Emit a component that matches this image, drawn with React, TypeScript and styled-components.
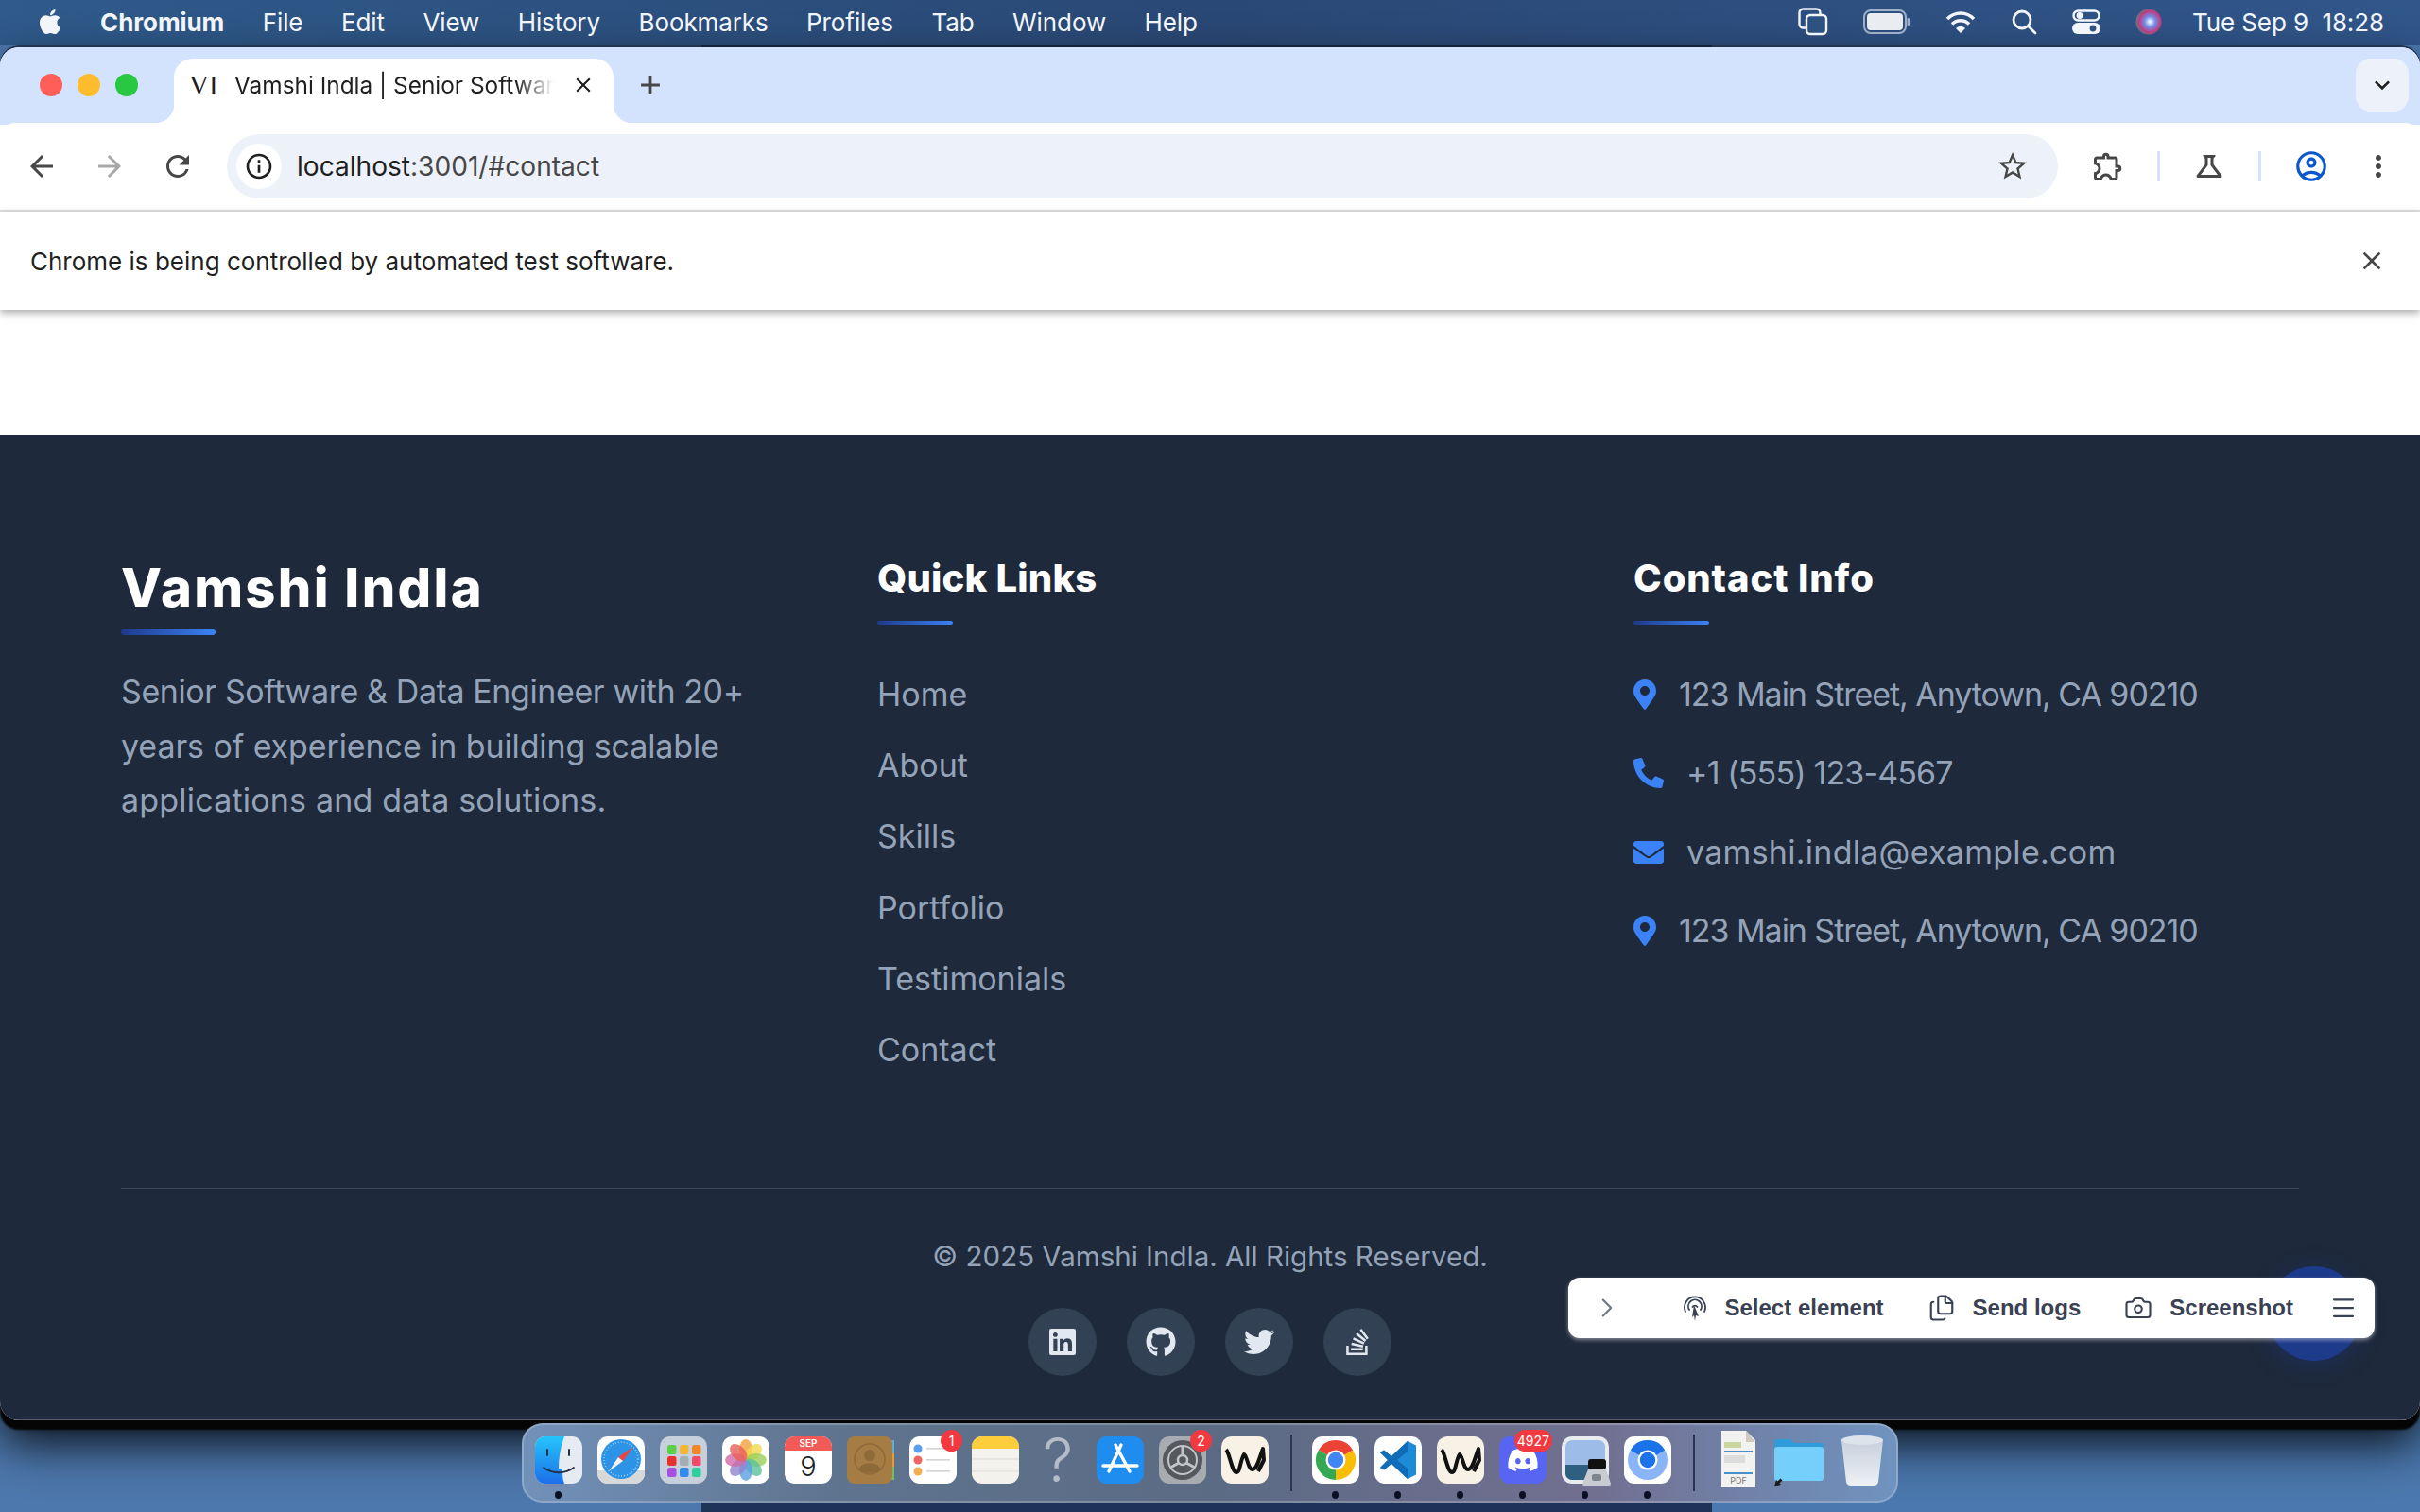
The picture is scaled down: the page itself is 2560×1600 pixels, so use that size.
import React from 'react';
import styled, { createGlobalStyle } from 'styled-components';
import { FaApple, FaMapMarkerAlt, FaPhoneAlt, FaEnvelope, FaLinkedin, FaGithub, FaTwitter, FaStackOverflow, FaDiscord } from 'react-icons/fa';
import { MdArrowBack, MdArrowForward, MdRefresh, MdInfoOutline, MdStarBorder, MdOutlineExtension, MdOutlineScience, MdOutlineAccountCircle, MdMoreVert, MdClose, MdAdd, MdKeyboardArrowDown } from 'react-icons/md';
import { ChevronRight, Files, Camera, Menu } from 'lucide-react';

const GlobalStyle = createGlobalStyle`
  html, body { margin: 0; padding: 0; background: #4d78ad; }
  * { box-sizing: border-box; }
`;

const FOOTER_FONT = `Inter, "Noto Sans", sans-serif`;
const MAC_FONT = `Inter, "Liberation Sans", sans-serif`;

const Desktop = styled.div`
  position: relative;
  width: 2560px;
  height: 1600px;
  overflow: hidden;
  background: linear-gradient(90deg, #4d78ad 0 29%, #1f3358 29% 70.75%, #4b78ae 70.75% 100%);
`;

/* macOS menu bar */
const MenuBar = styled.div`
  height: 48px;
  display: flex;
  align-items: center;
  padding: 0 38px 2px 38px;
  background: linear-gradient(90deg, #2f5a8a, #2a4875 50%, #31568a);
  color: #f2f5f9;
  font: 400 26px ${MAC_FONT};
  letter-spacing: -0.1px;
`;
const MenuItems = styled.div`
  display: flex;
  align-items: center;
  gap: 40.5px;
`;
const AppName = styled.span`
  font-weight: 700;
  margin-left: 38px;
`;
const MenuStatus = styled.div`
  margin-left: auto;
  display: flex;
  align-items: center;
  gap: 37px;
`;
const Clock = styled.span`
  margin-left: -5px;
`;

/* Browser window */
const BrowserWindow = styled.div`
  height: 1453px;
  margin-top: 2px;
  display: flex;
  flex-direction: column;
  overflow: hidden;
  border-radius: 20px;
  background: #fff;
  box-shadow: 0 -2px 0 rgba(20, 30, 50, 0.7), 0 10px 2px #050505, 0 24px 50px rgba(0, 0, 0, 0.9);
`;
const TabStrip = styled.div`
  height: 82px;
  flex: none;
  display: flex;
  align-items: flex-start;
  padding: 12px 12px 0 42px;
  background: #d3e3fd;
`;
const Light = styled.span<{ $color: string }>`
  width: 24px;
  height: 24px;
  margin: 16px 16px 0 0;
  border-radius: 50%;
  background: ${p => p.$color};
`;
const Tab = styled.div`
  position: relative;
  width: 465px;
  height: 68px;
  margin-left: 22px;
  display: flex;
  align-items: center;
  padding: 0 14px 12px 16px;
  border-radius: 20px 20px 0 0;
  background: #fff;
  color: #1f1f1f;
  font: 400 24.4px ${MAC_FONT};
  &::before, &::after {
    content: '';
    position: absolute;
    bottom: 0;
    width: 20px;
    height: 20px;
  }
  &::before {
    left: -20px;
    background: radial-gradient(circle at 0 0, #d3e3fd 20px, #fff 20.5px);
  }
  &::after {
    right: -20px;
    background: radial-gradient(circle at 100% 0, #d3e3fd 20px, #fff 20.5px);
  }
`;
const Favicon = styled.span`
  width: 32px;
  flex: none;
  font: 400 29px "Liberation Serif", serif;
`;
const TabTitle = styled.span`
  width: 338px;
  margin-left: 16px;
  flex: none;
  overflow: hidden;
  white-space: nowrap;
  -webkit-mask-image: linear-gradient(90deg, #000 88%, transparent);
  mask-image: linear-gradient(90deg, #000 88%, transparent);
`;
const IconSlot = styled.span<{ $color?: string }>`
  display: inline-flex;
  align-items: center;
  justify-content: center;
  flex: none;
  color: ${p => p.$color || '#474747'};
`;
const TabClose = styled(IconSlot)`
  margin-left: 18px;
`;
const NewTab = styled(IconSlot)`
  margin: 11px 0 0 22px;
`;
const TabSearch = styled.div`
  margin-left: auto;
  width: 56px;
  height: 56px;
  display: flex;
  align-items: center;
  justify-content: center;
  border-radius: 16px;
  background: #edf2fa;
  color: #1f1f1f;
`;
const Toolbar = styled.div`
  height: 94px;
  flex: none;
  display: flex;
  align-items: center;
  padding: 0 22px 0 26px;
  border-radius: 16px 16px 0 0;
  margin-top: -2px;
  background: #fff;
  border-bottom: 2px solid #e2e2e2;
`;
const NavIcons = styled.div`
  display: flex;
  gap: 36px;
`;
const AddressPill = styled.div`
  width: 1937px;
  height: 68px;
  margin-left: 34px;
  flex: none;
  display: flex;
  align-items: center;
  padding: 0 30px 0 10px;
  border-radius: 34px;
  background: #edf2fa;
`;
const InfoChip = styled.span`
  width: 48px;
  height: 48px;
  display: flex;
  align-items: center;
  justify-content: center;
  border-radius: 50%;
  background: #fff;
  color: #1f1f1f;
`;
const Url = styled.span`
  margin-left: 16px;
  font: 400 28.1px ${MAC_FONT};
  color: #1f1f1f;
`;
const UrlRest = styled.span`
  color: #474747;
`;
const Star = styled(IconSlot)`
  margin-left: auto;
`;
const ToolIcons = styled.div`
  margin-left: 35px;
  display: flex;
  align-items: center;
  gap: 34px;
`;
const Divider = styled.span`
  width: 3px;
  height: 32px;
  background: #d3e3fd;
`;
const InfoBar = styled.div`
  position: relative;
  height: 104px;
  flex: none;
  display: flex;
  align-items: center;
  justify-content: space-between;
  padding: 0 35px 0 32px;
  font: 400 26px ${MAC_FONT};
  color: #1f1f1f;
  box-shadow: 0 3px 8px rgba(0, 0, 0, 0.35);
`;
const PageGap = styled.div`
  height: 132px;
  flex: none;
`;

/* Page footer */
const Footer = styled.footer`
  flex: 1;
  padding: 112px 128px 0;
  background: #1e293b;
  color: #94a3b8;
  font-family: ${FOOTER_FONT};
  box-shadow: inset 0 -1px 0 rgba(255, 255, 255, 0.25);
`;
const Columns = styled.div`
  display: grid;
  grid-template-columns: repeat(3, 704px);
  gap: 96px;
`;
const BrandTitle = styled.div`
  padding-top: 10px;
  font-size: 56px;
  font-weight: 800;
  letter-spacing: 2.3px;
  line-height: 80px;
  color: #fff;
`;
const Accent = styled.div<{ $width: number; $height: number; $top: number }>`
  width: ${p => p.$width}px;
  height: ${p => p.$height}px;
  margin-top: ${p => p.$top}px;
  border-radius: 3px;
  background: linear-gradient(90deg, #1e3a8a, #3b82f6);
`;
const About = styled.p`
  margin: 31px 0 0;
  font-size: 34px;
  line-height: 57.5px;
`;
const AboutLine = styled.span<{ $tracking: number }>`
  display: block;
  letter-spacing: ${p => p.$tracking}px;
`;
const ColumnTitle = styled.div<{ $tracking: number }>`
  font-size: 40px;
  font-weight: 800;
  letter-spacing: ${p => p.$tracking}px;
  line-height: 80px;
  color: #fff;
`;
const LinkList = styled.div`
  margin-top: 46px;
  display: flex;
  flex-direction: column;
  gap: 19.2px;
`;
const FooterLink = styled.a`
  font-size: 34px;
  line-height: 56px;
`;
const ContactList = styled.div`
  margin-top: 46px;
  display: flex;
  flex-direction: column;
  gap: 27.3px;
`;
const ContactRow = styled.div<{ $tracking: number }>`
  display: flex;
  align-items: center;
  gap: 24px;
  font-size: 34px;
  line-height: 56px;
  letter-spacing: ${p => p.$tracking}px;
  svg { color: #3b82f6; flex: none; }
`;
const PinIcon = styled(FaMapMarkerAlt)`
  width: 24px;
  height: 32px;
`;
const FooterBottom = styled.div`
  margin-top: 118px;
  padding-top: 43px;
  border-top: 1px solid #3a4557;
  display: flex;
  flex-direction: column;
  align-items: center;
`;
const Copyright = styled.div`
  font-size: 29.5px;
  line-height: 56px;
`;
const Socials = styled.div`
  margin-top: 27px;
  display: flex;
  gap: 32px;
`;
const SocialLink = styled.a`
  width: 72px;
  height: 72px;
  display: flex;
  align-items: center;
  justify-content: center;
  border-radius: 50%;
  background: #334155;
  color: #e2e8f0;
`;

/* Floating dev toolbar and the button it covers */
const BlueFab = styled.div`
  position: absolute;
  left: 2398px;
  top: 1340px;
  width: 100px;
  height: 100px;
  border-radius: 50%;
  background: #1e3a8a;
  box-shadow: 0 4px 24px rgba(30, 58, 138, 0.4);
`;
const DevToolbar = styled.div`
  position: absolute;
  left: 1659px;
  top: 1352px;
  width: 853px;
  height: 64px;
  display: flex;
  align-items: center;
  padding: 0 18px 0 24px;
  border-radius: 12px;
  background: #fff;
  box-shadow: 0 2px 4px rgba(255, 255, 255, 0.45);
  color: #3a4152;
  font: 700 24px "Liberation Sans", sans-serif;
`;
const DevAction = styled.div<{ $left: number; $gap: number }>`
  display: flex;
  align-items: center;
  gap: ${p => p.$gap}px;
  margin-left: ${p => p.$left}px;
`;
const DevMenu = styled(IconSlot)`
  margin-left: auto;
`;

/* Dock */
const Dock = styled.div`
  position: absolute;
  left: 552px;
  top: 1506px;
  width: 1456px;
  height: 84px;
  display: flex;
  padding: 12px 0 0 12px;
  border-radius: 22px;
  border: 2px solid rgba(255, 255, 255, 0.22);
  background: linear-gradient(90deg, #7291b9, #5f748f 22%, #5b6b84 50%, #726f90 78%, #6f93bf);
`;
const DockTile = styled.div`
  position: relative;
  width: 50px;
  height: 50px;
  margin-right: 16px;
  flex: none;
`;
const RunDot = styled.span`
  position: absolute;
  left: 21px;
  top: 58px;
  width: 7px;
  height: 8px;
  border-radius: 50%;
  background: #0a1024;
`;
const Badge = styled.span`
  position: absolute;
  right: -6px;
  top: -7px;
  min-width: 23px;
  height: 23px;
  padding: 0 3px;
  border-radius: 12px;
  background: #f2393f;
  color: #fff;
  text-align: center;
  font: 400 14px/23px ${MAC_FONT};
`;
const DockSep = styled.span`
  width: 2px;
  height: 60px;
  margin: -2px 21px 0 7px;
  flex: none;
  background: #2b3550;
`;
const QuestionMark = styled.span`
  display: block;
  text-align: center;
  font: 300 64px/50px ${MAC_FONT};
  color: #b4bcc8;
`;
const DockArt = styled.svg<{ $top?: number; $left?: number }>`
  display: block;
  margin: ${p => p.$top || 0}px 0 0 ${p => p.$left || 0}px;
`;

const Rounded = ({ children, fill = '#fff' }: { children?: React.ReactNode; fill?: string }) => (
  <svg width="50" height="50" viewBox="0 0 50 50">
    <rect width="50" height="50" rx="11" fill={fill} />
    {children}
  </svg>
);

const Finder = () => (
  <svg width="50" height="50" viewBox="0 0 50 50">
    <defs>
      <linearGradient id="fnd" x1="0" y1="0" x2="0" y2="1">
        <stop offset="0" stopColor="#25c5fb" />
        <stop offset="1" stopColor="#1c6fe9" />
      </linearGradient>
    </defs>
    <rect width="50" height="50" rx="11" fill="#e6ebf2" />
    <path d="M11 0h20c-4 12-6 22-6 34h4c0 6 0 11 2 16H11A11 11 0 0 1 0 39V11A11 11 0 0 1 11 0z" fill="url(#fnd)" />
    <path d="M13 14v6M36 14v6" stroke="#22304a" strokeWidth="2" strokeLinecap="round" />
    <path d="M9 33c9 7 23 7 32 0" stroke="#22304a" strokeWidth="1.8" fill="none" strokeLinecap="round" />
  </svg>
);
const Safari = () => (
  <Rounded>
    <path d="M0 36h50v3a11 11 0 0 1-11 11H11A11 11 0 0 1 0 39z" fill="#d6d8da" />
    <circle cx="25" cy="24" r="21" fill="#2d93e6" />
    <circle cx="25" cy="24" r="18" fill="none" stroke="#9bd0f4" strokeWidth="1.4" strokeDasharray="1 2" />
    <path d="M38 11L27 26 22 22z" fill="#f0423c" />
    <path d="M12 37l10-15 5 4z" fill="#f2f4f7" />
  </Rounded>
);
const Launchpad = () => {
  const colors = ['#5ad04a', '#f5b52e', '#f0862a', '#e6312e', '#a4adb5', '#f24a6a', '#a550e0', '#2f8cf0', '#2fcf9d'];
  return (
    <Rounded fill="#c6d0dc">
      {colors.map((c, i) => (
        <rect key={c} x={8 + (i % 3) * 13} y={9 + Math.floor(i / 3) * 12} width="9.500" height="10" rx="2.5" fill={c} />
      ))}
    </Rounded>
  );
};
const Photos = () => {
  const petals = ['#f4a03a', '#f0d84a', '#9ad05a', '#5cc09a', '#5aa0e0', '#9085d0', '#d06aa8', '#e8605a'];
  return (
    <Rounded>
      {petals.map((c, i) => (
        <ellipse key={c} cx="25" cy="14" rx="7" ry="11" fill={c} opacity="0.8" transform={`rotate(${i * 45} 25 25)`} />
      ))}
    </Rounded>
  );
};
const Calendar = () => (
  <Rounded>
    <path d="M0 15V11A11 11 0 0 1 11 0h28a11 11 0 0 1 11 11v4z" fill="#f25a57" />
    <text x="25" y="11" textAnchor="middle" fontSize="10" fontWeight="600" fontFamily="Inter, sans-serif" fill="#fff">SEP</text>
    <text x="25" y="42" textAnchor="middle" fontSize="29" fontFamily="Inter, sans-serif" fontWeight="300" fill="#222">9</text>
  </Rounded>
);
const Contacts = () => (
  <svg width="50" height="50" viewBox="0 0 50 50">
    <rect x="40" y="4" width="10" height="14" fill="#58b0e0" />
    <rect x="40" y="18" width="10" height="14" fill="#e89a30" />
    <rect x="40" y="32" width="10" height="14" fill="#6cc060" />
    <rect width="48" height="50" rx="8" fill="#a67c45" />
    <circle cx="24" cy="24" r="16" fill="none" stroke="#8f6a39" strokeWidth="1.5" />
    <circle cx="24" cy="20" r="6" fill="#8f6a39" />
    <path d="M12 35c3-9 21-9 24 0-7 5-17 5-24 0z" fill="#8f6a39" />
  </svg>
);
const Reminders = () => (
  <Rounded>
    {['#3b8df0', '#ef4a44', '#f0a030'].map((c, i) => (
      <g key={c}>
        <circle cx="9" cy={13 + i * 12} r="4.5" fill={c} opacity="0.85" />
        <rect x="18" y={12 + i * 12} width="25" height="1.6" fill="#d5d5d8" />
      </g>
    ))}
  </Rounded>
);
const Notes = () => (
  <Rounded fill="#f4f2ec">
    <path d="M0 13V11A11 11 0 0 1 11 0h28a11 11 0 0 1 11 11v2z" fill="#fdcd3c" />
    <path d="M0 24h50M0 37h50" stroke="#dedbd2" strokeWidth="1" />
  </Rounded>
);
const AppStore = () => (
  <Rounded fill="#1f8cf0">
    <path d="M26 9L13 37M20 9l15 28M7 31h36" stroke="#fff" strokeWidth="3.4" strokeLinecap="round" fill="none" />
  </Rounded>
);
const SystemSettings = () => (
  <Rounded fill="#a8abaf">
    <circle cx="25" cy="25" r="21" fill="#55585d" />
    <circle cx="25" cy="25" r="15" fill="none" stroke="#c2c4c7" strokeWidth="2" />
    <circle cx="25" cy="25" r="5" fill="none" stroke="#c2c4c7" strokeWidth="2.5" />
    <path d="M25 20V10M29 28l9 5M21 28l-9 5" stroke="#c2c4c7" strokeWidth="3" />
  </Rounded>
);
const Warp = () => (
  <Rounded fill="#f7f1e6">
    <path d="M5 14c4 4 6 24 11 24 4 0 4-13 8-19 3 0 4 16 9 16 5 0 7-12 11-22l1 12-6 12" stroke="#111" strokeWidth="4" fill="none" strokeLinejoin="round" />
  </Rounded>
);
const Chrome = () => (
  <Rounded>
    <path d="M25 25L6.800 14.5A21 21 0 0 1 43.2 14.5z" fill="#ea4335" />
    <path d="M25 25L43.2 14.5A21 21 0 0 1 25 46z" fill="#fbbc04" />
    <path d="M25 25L25 46A21 21 0 0 1 6.800 14.5z" fill="#34a853" />
    <circle cx="25" cy="25" r="10.5" fill="#fff" />
    <circle cx="25" cy="25" r="8.2" fill="#4285f4" />
  </Rounded>
);
const VsCode = () => (
  <Rounded>
    <path d="M35 5l9 4.5v31L35 45 18 29l-8 6.5-4-2.500 8-8-8-8 4-2.500 8 6.500z" fill="#1f8ad6" />
    <path d="M35 5v40L18 29l-8 6.5-4-2.500 8-8-8-8 4-2.500 8 6.500zM35 16l-11 9 11 9z" fill="#0f6cb8" fillRule="evenodd" />
  </Rounded>
);
const Discord = () => (
  <svg width="50" height="50" viewBox="0 0 50 50">
    <rect width="50" height="50" rx="11" fill="#5865f2" />
    <foreignObject x="8" y="8" width="34" height="34">
      <FaDiscord size={34} color="#fff" />
    </foreignObject>
  </svg>
);
const Preview = () => (
  <svg width="52" height="52" viewBox="0 0 52 52">
    <rect width="50" height="50" rx="11" fill="#e8ecef" />
    <rect x="4" y="4" width="42" height="42" rx="7" fill="#9dbce8" />
    <path d="M4 30h42v9a7 7 0 0 1-7 7H11a7 7 0 0 1-7-7z" fill="#2f5f80" />
    <rect x="28" y="24" width="19" height="11" rx="3" fill="#111" />
    <path d="M28 35h19l5 15a2 2 0 0 1-2 2H24a2 2 0 0 1-2-2z" fill="#c8ccd0" />
    <rect x="32" y="40" width="10" height="7" rx="2" fill="#7e858c" />
  </svg>
);
const Chromium = () => (
  <Rounded>
    <circle cx="25" cy="25" r="21" fill="#8ab4f8" />
    <path d="M25 25L6.800 14.5A21 21 0 0 1 43.2 14.5z" fill="#1a73e8" />
    <circle cx="25" cy="25" r="10.5" fill="#fff" />
    <circle cx="25" cy="25" r="8.2" fill="#1a73e8" />
  </Rounded>
);
const PdfDoc = () => (
  <DockArt width="50" height="60" viewBox="0 0 50 60" $top={-6}>
    <path d="M7 0h26l10 10v50H7z" fill="#f2f2f0" />
    <path d="M33 0v12h10z" fill="#cfcac0" />
    <rect x="10" y="12" width="18" height="6" fill="#c9d6a0" />
    <rect x="10" y="21" width="30" height="2" fill="#4a90c8" />
    <rect x="10" y="26" width="22" height="8" fill="#dcdcdc" />
    <rect x="10" y="44" width="30" height="2" fill="#4a90c8" />
    <text x="25" y="56" textAnchor="middle" fontSize="9" fontFamily="Inter, sans-serif" fill="#777">PDF</text>
  </DockArt>
);
const Folder = () => (
  <DockArt width="56" height="54" viewBox="0 0 56 54" $left={-3}>
    <path d="M0 6a3 3 0 0 1 3-3h14l4 4h28a3 3 0 0 1 3 3v36H0z" fill="#2f9bdb" />
    <rect x="0" y="11" width="52" height="36" rx="3" fill="#74cffa" />
    <path d="M0 53l2-7 1.500 1.500 3-3 2 2-3 3L7 51z" fill="#1c1c1e" />
  </DockArt>
);
const Trash = () => (
  <DockArt width="50" height="56" viewBox="0 0 50 56" $top={-2} $left={-1}>
    <defs>
      <linearGradient id="trs" x1="0" y1="0" x2="0" y2="1">
        <stop offset="0" stopColor="#c6d0dd" />
        <stop offset="1" stopColor="#eef1f4" />
      </linearGradient>
    </defs>
    <path d="M3 6h44l-5 44a5 5 0 0 1-5 4H13a5 5 0 0 1-5-4z" fill="url(#trs)" />
    <ellipse cx="25" cy="6" rx="22" ry="5" fill="#dde3ea" />
  </DockArt>
);

const StageManager = () => (
  <svg width="32" height="30" viewBox="0 0 32 30" fill="none" stroke="#f2f5f9" strokeWidth="2.4">
    <rect x="1.5" y="1.5" width="22" height="20" rx="4" />
    <rect x="9" y="8" width="21" height="20" rx="4" fill="#2e527f" />
  </svg>
);
const Battery = () => (
  <svg width="50" height="26" viewBox="0 0 50 26">
    <rect x="1" y="1" width="44" height="24" rx="7" fill="none" stroke="#9db0c8" strokeWidth="2" />
    <rect x="4" y="4" width="38" height="18" rx="4" fill="#e9edf2" />
    <rect x="46.5" y="9" width="2.5" height="8" rx="1" fill="#9db0c8" />
  </svg>
);
const Wifi = () => (
  <svg width="32" height="26" viewBox="0 0 32 26" fill="none" stroke="#f2f5f9" strokeWidth="3.6">
    <path d="M2 10c8-8 20-8 28 0M7 15.5c5-5 13-5 18 0" />
    <path d="M16 25l-5-5c3-2.600 7-2.600 10 0z" fill="#f2f5f9" stroke="none" />
  </svg>
);
const Spotlight = () => (
  <svg width="28" height="28" viewBox="0 0 28 28" fill="none" stroke="#f2f5f9" strokeWidth="2.8">
    <circle cx="12" cy="12" r="9" />
    <path d="M19 19l7 7" strokeLinecap="round" />
  </svg>
);
const ControlCenter = () => (
  <svg width="30" height="26" viewBox="0 0 30 26">
    <rect x="1.5" y="1.5" width="27" height="10" rx="5" fill="none" stroke="#f2f5f9" strokeWidth="2.4" />
    <circle cx="8" cy="6.5" r="3.4" fill="#f2f5f9" />
    <rect x="0" y="14" width="30" height="12" rx="6" fill="#f2f5f9" />
    <circle cx="22" cy="20" r="3.4" fill="#2e527f" />
  </svg>
);
const Siri = () => (
  <svg width="28" height="28" viewBox="0 0 28 28">
    <defs>
      <radialGradient id="siri" cx="55%" cy="50%" r="60%">
        <stop offset="0" stopColor="#ffffff" />
        <stop offset="0.35" stopColor="#6f8fe8" />
        <stop offset="0.7" stopColor="#c23a7e" />
        <stop offset="1" stopColor="#2f9a84" />
      </radialGradient>
    </defs>
    <circle cx="14" cy="14" r="13.5" fill="url(#siri)" />
  </svg>
);
const SelectElement = () => (
  <svg width="26" height="30" viewBox="0 0 26 30" fill="none" stroke="#3a4152" strokeWidth="1.8" strokeLinecap="round">
    <path d="M3 19a11 11 0 1 1 20 0M7 17a7 7 0 1 1 12 0M10.500 14a3 3 0 0 1 5 0" />
    <path d="M12 12l5 12-3-1-1 6-1-6-2 2z" fill="#3a4152" stroke="none" />
  </svg>
);

const dockApps = [
  { id: 'finder', icon: <Finder />, running: true },
  { id: 'safari', icon: <Safari /> },
  { id: 'launchpad', icon: <Launchpad /> },
  { id: 'photos', icon: <Photos /> },
  { id: 'calendar', icon: <Calendar /> },
  { id: 'contacts', icon: <Contacts /> },
  { id: 'reminders', icon: <Reminders />, badge: '1' },
  { id: 'notes', icon: <Notes /> },
  { id: 'unknown', icon: <QuestionMark>?</QuestionMark> },
  { id: 'appstore', icon: <AppStore /> },
  { id: 'settings', icon: <SystemSettings />, badge: '2' },
  { id: 'warp', icon: <Warp /> },
];
const runningApps = [
  { id: 'chrome', icon: <Chrome />, running: true },
  { id: 'vscode', icon: <VsCode />, running: true },
  { id: 'warp2', icon: <Warp />, running: true },
  { id: 'discord', icon: <Discord />, running: true, badge: '4927' },
  { id: 'preview', icon: <Preview />, running: true },
  { id: 'chromium', icon: <Chromium />, running: true },
];
const stackApps = [
  { id: 'pdf', icon: <PdfDoc /> },
  { id: 'folder', icon: <Folder /> },
  { id: 'trash', icon: <Trash /> },
];

type DockApp = { id: string; icon: React.ReactNode; running?: boolean; badge?: string };
const renderTile = (app: DockApp) => (
  <DockTile key={app.id}>
    {app.icon}
    {app.badge && <Badge>{app.badge}</Badge>}
    {app.running && <RunDot />}
  </DockTile>
);

const menuItems = ['File', 'Edit', 'View', 'History', 'Bookmarks', 'Profiles', 'Tab', 'Window', 'Help'];
const quickLinks = ['Home', 'About', 'Skills', 'Portfolio', 'Testimonials', 'Contact'];

export default function App() {
  return (
    <Desktop>
      <GlobalStyle />
      <MenuBar>
        <FaApple size={30} />
        <MenuItems>
          <AppName>Chromium</AppName>
          {menuItems.map(m => <span key={m}>{m}</span>)}
        </MenuItems>
        <MenuStatus>
          <StageManager />
          <Battery />
          <Wifi />
          <Spotlight />
          <ControlCenter />
          <Siri />
          <Clock>Tue Sep 9&nbsp; 18:28</Clock>
        </MenuStatus>
      </MenuBar>

      <BrowserWindow>
        <TabStrip>
          <Light $color="#ff5f57" />
          <Light $color="#febc2e" />
          <Light $color="#28c840" />
          <Tab>
            <Favicon>VI</Favicon>
            <TabTitle>Vamshi Indla | Senior Software &amp; Data Engineer</TabTitle>
            <TabClose $color="#1f1f1f"><MdClose size={26} /></TabClose>
          </Tab>
          <NewTab><MdAdd size={34} /></NewTab>
          <TabSearch><MdKeyboardArrowDown size={32} /></TabSearch>
        </TabStrip>

        <Toolbar>
          <NavIcons>
            <IconSlot><MdArrowBack size={36} /></IconSlot>
            <IconSlot $color="#a8a8a8"><MdArrowForward size={36} /></IconSlot>
            <IconSlot><MdRefresh size={36} /></IconSlot>
          </NavIcons>
          <AddressPill>
            <InfoChip><MdInfoOutline size={32} /></InfoChip>
            <Url>localhost<UrlRest>:3001/#contact</UrlRest></Url>
            <Star><MdStarBorder size={36} /></Star>
          </AddressPill>
          <ToolIcons>
            <IconSlot><MdOutlineExtension size={36} /></IconSlot>
            <Divider />
            <IconSlot><MdOutlineScience size={36} /></IconSlot>
            <Divider />
            <IconSlot $color="#0b57d0"><MdOutlineAccountCircle size={38} /></IconSlot>
            <IconSlot><MdMoreVert size={36} /></IconSlot>
          </ToolIcons>
        </Toolbar>

        <InfoBar>
          Chrome is being controlled by automated test software.
          <IconSlot><MdClose size={32} /></IconSlot>
        </InfoBar>
        <PageGap />

        <Footer>
          <Columns>
            <div>
              <BrandTitle>Vamshi Indla</BrandTitle>
              <Accent $width={100} $height={6} $top={4} />
              <About>
                <AboutLine $tracking={-0.4}>Senior Software &amp; Data Engineer with 20+</AboutLine>
                <AboutLine $tracking={-0.1}>years of experience in building scalable</AboutLine>
                <AboutLine $tracking={0.2}>applications and data solutions.</AboutLine>
              </About>
            </div>
            <div>
              <ColumnTitle $tracking={0.2}>Quick Links</ColumnTitle>
              <Accent $width={80} $height={4} $top={5} />
              <LinkList>
                {quickLinks.map(l => <FooterLink key={l}>{l}</FooterLink>)}
              </LinkList>
            </div>
            <div>
              <ColumnTitle $tracking={0.9}>Contact Info</ColumnTitle>
              <Accent $width={80} $height={4} $top={5} />
              <ContactList>
                <ContactRow $tracking={-1.05}><PinIcon />123 Main Street, Anytown, CA 90210</ContactRow>
                <ContactRow $tracking={-0.87}><FaPhoneAlt size={32} />+1 (555) 123-4567</ContactRow>
                <ContactRow $tracking={0.27}><FaEnvelope size={32} />vamshi.indla@example.com</ContactRow>
                <ContactRow $tracking={-1.05}><PinIcon />123 Main Street, Anytown, CA 90210</ContactRow>
              </ContactList>
            </div>
          </Columns>
          <FooterBottom>
            <Copyright>© 2025 Vamshi Indla. All Rights Reserved.</Copyright>
            <Socials>
              <SocialLink><FaLinkedin size={32} /></SocialLink>
              <SocialLink><FaGithub size={32} /></SocialLink>
              <SocialLink><FaTwitter size={32} /></SocialLink>
              <SocialLink><FaStackOverflow size={32} /></SocialLink>
            </Socials>
          </FooterBottom>
        </Footer>
      </BrowserWindow>

      <BlueFab />
      <DevToolbar>
        <IconSlot $color="#6b7280"><ChevronRight size={34} strokeWidth={1.4} /></IconSlot>
        <DevAction $left={63} $gap={18.5}><SelectElement />Select element</DevAction>
        <DevAction $left={46} $gap={18}><IconSlot $color="#3a4152"><Files size={30} strokeWidth={1.7} /></IconSlot>Send logs</DevAction>
        <DevAction $left={46} $gap={18}><IconSlot $color="#3a4152"><Camera size={30} strokeWidth={1.7} /></IconSlot>Screenshot</DevAction>
        <DevMenu $color="#3a4152"><Menu size={30} strokeWidth={1.8} /></DevMenu>
      </DevToolbar>

      <Dock>
        {dockApps.map(renderTile)}
        <DockSep />
        {runningApps.map(renderTile)}
        <DockSep />
        {stackApps.map(renderTile)}
      </Dock>
    </Desktop>
  );
}
